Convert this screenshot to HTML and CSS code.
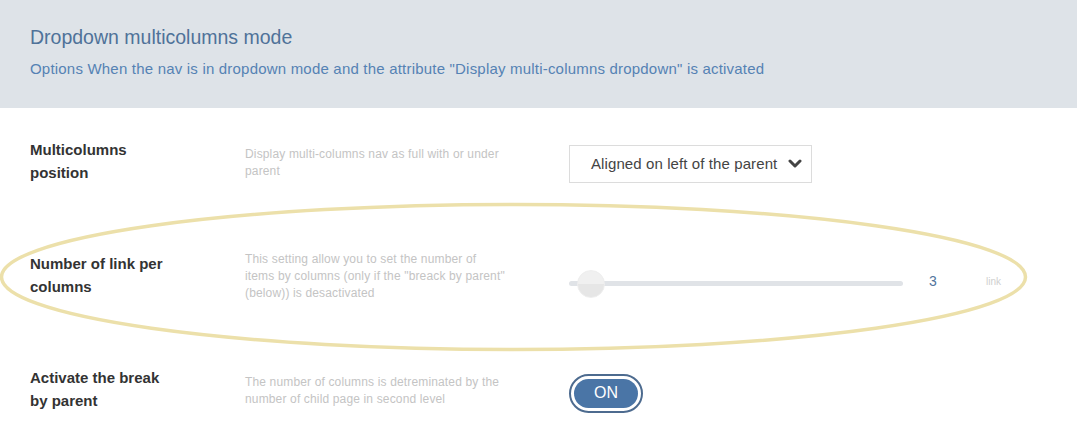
FILE: index.html
```html
<!DOCTYPE html>
<html>
<head>
<meta charset="utf-8">
<link rel="stylesheet" href="styles.css">
</head>
<body>
<div class="page">
  <header class="head">
    <h1 class="title">Dropdown multicolumns mode</h1>
    <p class="subtitle">Options When the nav is in dropdown mode and the attribute "Display multi-columns dropdown" is activated</p>
  </header>
  <section class="rows">
    <div class="row">
      <div class="label">Multicolumns position</div>
      <div class="desc">Display multi-columns nav as full with or under parent</div>
      <div class="control">
        <div class="select">
          <span class="select-text">Aligned on left of the parent</span>
          <svg class="chev" width="14" height="10" viewBox="0 0 14 10"><polyline points="2,2 7,7 12,2" fill="none" stroke="#444" stroke-width="3" stroke-linecap="round" stroke-linejoin="round"/></svg>
        </div>
      </div>
    </div>
    <div class="row">
      <div class="label">Number of link per columns</div>
      <div class="desc">This setting allow you to set the number of items by columns (only if the "breack by parent" (below)) is desactivated</div>
      <div class="control">
        <div class="slider">
          <div class="track"></div>
          <div class="thumb"></div>
        </div>
        <span class="value">3</span>
        <span class="unit">link</span>
      </div>
    </div>
    <div class="row">
      <div class="label">Activate the break by parent</div>
      <div class="desc">The number of columns is detreminated by the number of child page in second level</div>
      <div class="control">
        <div class="toggle"><span class="toggle-in">ON</span></div>
      </div>
    </div>
  </section>
  <svg class="mark" width="1077" height="448" viewBox="0 0 1077 448">
    <ellipse cx="513.5" cy="277" rx="512" ry="72.5" fill="none" stroke="#ece0aa" stroke-width="3.5"/>
  </svg>
</div>
</body>
</html>
```
FILE: styles.css
```css
* { box-sizing: border-box; }
html, body { margin: 0; padding: 0; background: #fff; }
body { font-family: "Liberation Sans", Arial, sans-serif; width: 1077px; height: 448px; overflow: hidden; }
.page { position: relative; width: 1077px; height: 448px; }
.head { background: #dee3e8; height: 108px; padding: 25px 30px 0; }
.title { margin: 0; font-weight: normal; font-size: 19.5px; line-height: 24px; color: #4f7299; }
.subtitle { margin: 11px 0 0; font-size: 15px; letter-spacing: 0.2px; line-height: 18px; color: #5582b4; }
.rows { display: flex; flex-direction: column; }
.row { display: grid; grid-template-columns: 215px 324px 1fr; align-items: center; height: 114px; padding-left: 30px; }
.label { width: 150px; font-weight: bold; font-size: 15px; line-height: 22.5px; color: #333; padding-bottom: 7px; }
.desc { width: 262px; font-size: 12px; letter-spacing: 0.15px; line-height: 17px; color: #c4c4c4; padding-bottom: 5px; }
.control { display: flex; align-items: center; }
.select { width: 243px; height: 38px; border: 1px solid #dcdcdc; display: flex; align-items: center; padding-left: 21px; margin-bottom: 3px; }
.select-text { font-size: 15px; letter-spacing: 0.1px; color: #444; }
.chev { margin-left: 11px; }
.slider { position: relative; width: 334px; height: 30px; display: flex; align-items: center; margin-top: 9px; }
.track { width: 100%; height: 5px; background: #e0e3e7; border-radius: 3px; }
.thumb { position: absolute; left: 8px; top: 1px; width: 28px; height: 28px; border-radius: 50%; background: linear-gradient(#f0f0f0 50%, #e6e6e6 50%); border: 1px solid #eeeeee; }
.value { margin-left: 26px; margin-top: 3px; font-size: 14px; color: #52759c; width: 57px; }
.unit { font-size: 10px; color: #cfcfcf; margin-top: 5px; }
.toggle { width: 74px; height: 39px; border: 2px solid #4d6b8f; border-radius: 20px; padding: 3px; }
.toggle-in { display: flex; align-items: center; justify-content: center; height: 100%; border-radius: 16px; background: #4a75a6; color: #fff; font-size: 16px; }
.mark { position: absolute; left: 0; top: 0; pointer-events: none; }
```
